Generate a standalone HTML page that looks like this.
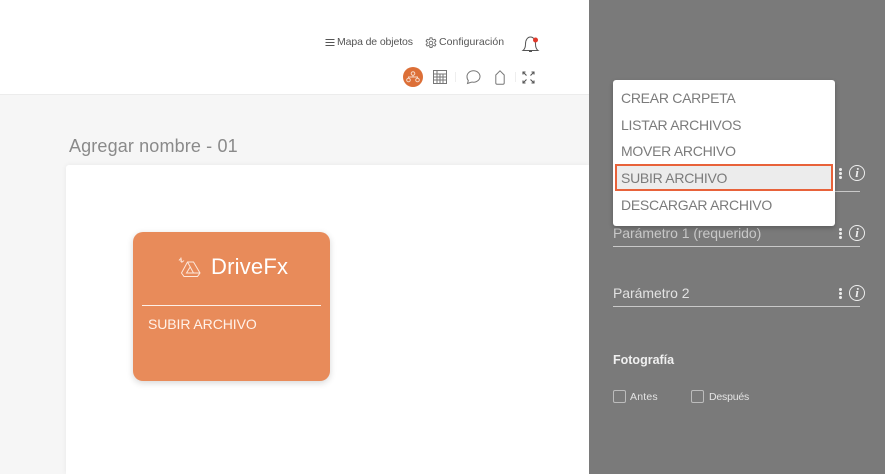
<!DOCTYPE html>
<html><head><meta charset="utf-8">
<style>
html,body{margin:0;padding:0;width:885px;height:474px;overflow:hidden;background:#fff;font-family:"Liberation Sans",sans-serif}
#w{position:absolute;left:0;top:0;width:885px;height:474px;filter:blur(.35px);overflow:hidden}
.a{position:absolute;white-space:nowrap}
svg{position:absolute;overflow:visible}
.m{color:#7b7b7b;font-size:14px;left:621px;line-height:16px;letter-spacing:-.27px}
.l{left:613px;width:247px;height:1px;background:#c9c9c9}
.p{left:613px;color:#e2e2e2;font-size:14px;line-height:16px;letter-spacing:-.05px}
.d{width:3px;height:3px;border-radius:50%;background:#eee;left:838.500px}
.i{width:14px;height:14px;border:1.400px solid #eee;border-radius:50%;left:849px;color:#eee;font:italic bold 13px/14px "Liberation Serif",serif;text-align:center}
.c{width:11px;height:11px;border:1.200px solid #bcbcbc;border-radius:2px;top:390px}
</style></head><body><div id="w">
<div class="a" style="left:0;top:94px;width:589px;height:380px;background:#f6f6f6;border-top:1px solid #ececec;box-sizing:border-box"></div>
<div class="a" style="left:66px;top:165px;width:523px;height:309px;background:#fff;box-shadow:0 0 6px rgba(0,0,0,.06);border-radius:3px 0 0 0"></div>
<div class="a" style="left:69px;top:136px;font-size:18px;line-height:21px;color:#8a8a8a;letter-spacing:.14px">Agregar nombre - 01</div>

<svg style="left:325px;top:38px" width="10" height="10" fill="none" stroke="#555" stroke-width="1"><path d="M0.500 1.500H9.500M0.500 4.500H9.500M0.500 7.500H9.500"/></svg>
<div class="a" style="left:337px;top:36px;font-size:10.500px;line-height:13px;color:#555;letter-spacing:-.12px">Mapa de objetos</div>
<svg style="left:425px;top:37px" width="12" height="12" viewBox="0 0 12 12" fill="none" stroke="#666" stroke-width=".9"><circle cx="6" cy="6" r="1.800"/><path d="M5 .8h2l.3 1.500 1.200.6 1.400-.6 1 1.700-1.100 1 0 1.400 1.100 1-1 1.700-1.400-.6-1.200.6-.3 1.500H5l-.3-1.500-1.200-.6-1.400.6-1-1.700 1.100-1 0-1.400-1.100-1 1-1.700 1.400.6 1.200-.6z"/></svg>
<div class="a" style="left:439px;top:36px;font-size:10.500px;line-height:13px;color:#555;letter-spacing:.02px">Configuración</div>
<svg style="left:522px;top:35px" width="18" height="18" viewBox="0 0 18 18" fill="none" stroke="#555" stroke-width="1"><path d="M1 15.500C3 14 3.500 12 3.500 9 3.500 5 5.500 2 8.500 2S13.500 5 13.500 9C13.500 12 14 14 16 15.500Z"/><path d="M7 16.500h3"/><circle cx="13.500" cy="5" r="2.500" fill="#e0392b" stroke="none"/></svg>

<div class="a" style="left:403px;top:67px;width:20px;height:20px;border-radius:50%;background:#dc6f37"></div>
<svg style="left:403px;top:67px" width="20" height="20" fill="none" stroke="#f6d9c8" stroke-width="1"><circle cx="10" cy="6.500" r="1.800"/><circle cx="5.500" cy="13" r="1.800"/><circle cx="14.500" cy="13" r="1.800"/><path d="M10 8.300V10M5.500 11.200V10H14.500V11.200"/></svg>
<svg style="left:433px;top:70px" width="14" height="14" fill="none" stroke="#777" stroke-width="1"><path d="M.5 .5H13.500V13.500H.5ZM.5 4H13.500M.5 7H13.500M.5 10H13.500M4 .5V13.500M7 4V13.500M10 4V13.500"/></svg>
<div class="a" style="left:455px;top:72px;width:1px;height:10px;background:#eeeeee"></div>
<svg style="left:466px;top:70px" width="15" height="14" fill="none" stroke="#777" stroke-width="1"><path d="M7.500 .8C11.200 .8 14 3.400 14 6.500S11.200 12.200 7.500 12.200C6.300 12.200 5.200 12 4.300 12.500L1.500 13.500 2.300 10.600C1.400 9.600 1 8 1 6.500 1 3.400 3.800 .8 7.500 .8Z"/></svg>
<svg style="left:495px;top:70px" width="10" height="15" fill="none" stroke="#777" stroke-width="1"><path d="M.8 5L5 .8 9.200 5V13C9.200 13.800 8.800 14.200 8 14.200H2C1.200 14.200 .8 13.800 .8 13Z"/></svg>
<div class="a" style="left:515px;top:72px;width:1px;height:10px;background:#eeeeee"></div>
<svg style="left:522px;top:71px" width="13" height="13" fill="none" stroke="#555" stroke-width="1.100"><path d="M4.500 4.500L1 1M1 3.500V1H3.500M8.500 4.500L12 1M9.500 1H12V3.500M4.500 8.500L1 12M1 9.500V12H3.500M8.500 8.500L12 12M9.500 12H12V9.500"/></svg>

<div class="a" style="left:133px;top:232px;width:197px;height:149px;border-radius:10px;background:#e88b5a;box-shadow:0 2px 7px rgba(0,0,0,.16)"></div>
<svg style="left:178px;top:256px" width="24" height="22" viewBox="0 0 24 22" fill="none" stroke="#fde7da" stroke-width="1"><path d="M9.500 6H15.500L22 17 19.500 20.500H6L3.500 17L9.500 6ZM12.500 10.500L8.500 17H22M9.500 6L15.500 17"/><path d="M1 4.500C2 3 3 2 3.200 3.500 3.400 5 3 6.500 4 6 5 5.500 5.500 4.500 6 5M3 1.500V6"/></svg>
<div class="a" style="left:211px;top:253px;font-size:22px;line-height:28px;color:#fff;letter-spacing:.2px">DriveFx</div>
<div class="a" style="left:142px;top:305px;width:179px;height:1px;background:#fdf0e8"></div>
<div class="a" style="left:148px;top:316px;font-size:14px;line-height:16px;color:#fff2ea;letter-spacing:-.08px">SUBIR ARCHIVO</div>

<div class="a" style="left:589px;top:0;width:296px;height:474px;background:#7a7a7a"></div>

<div class="a p" style="top:225px;color:#c9c9c9">Parámetro 1 (requerido)</div>
<div class="a l" style="top:246px"></div>
<div class="a l" style="top:191px"></div>
<div class="a p" style="top:285px">Parámetro 2</div>
<div class="a l" style="top:306px"></div>

<div class="a d" style="top:168px"></div><div class="a d" style="top:172px"></div><div class="a d" style="top:176px"></div>
<div class="a i" style="top:165px">i</div>
<div class="a d" style="top:228px"></div><div class="a d" style="top:232px"></div><div class="a d" style="top:236px"></div>
<div class="a i" style="top:225px">i</div>
<div class="a d" style="top:288px"></div><div class="a d" style="top:292px"></div><div class="a d" style="top:296px"></div>
<div class="a i" style="top:285px">i</div>

<div class="a" style="left:613px;top:353px;font-size:12.500px;line-height:15px;font-weight:bold;color:#f0f0f0">Fotografía</div>
<div class="a c" style="left:613px"></div>
<div class="a" style="left:630px;top:390.500px;font-size:10.500px;line-height:13px;color:#e4e4e4;letter-spacing:.2px">Antes</div>
<div class="a c" style="left:691px"></div>
<div class="a" style="left:709px;top:390.500px;font-size:10.500px;line-height:13px;color:#e4e4e4;letter-spacing:-.2px">Después</div>

<div class="a" style="left:613px;top:80px;width:222px;height:146px;background:#fff;border-radius:3px;box-shadow:0 2px 5px rgba(0,0,0,.25)"></div>
<div class="a" style="left:615px;top:164px;width:218px;height:27px;background:#ececec;border:2px solid #e8623a;box-sizing:border-box"></div>
<div class="a m" style="top:90px">CREAR CARPETA</div>
<div class="a m" style="top:117px">LISTAR ARCHIVOS</div>
<div class="a m" style="top:143px">MOVER ARCHIVO</div>
<div class="a m" style="top:170px">SUBIR ARCHIVO</div>
<div class="a m" style="top:197px">DESCARGAR ARCHIVO</div>
</div></body></html>
